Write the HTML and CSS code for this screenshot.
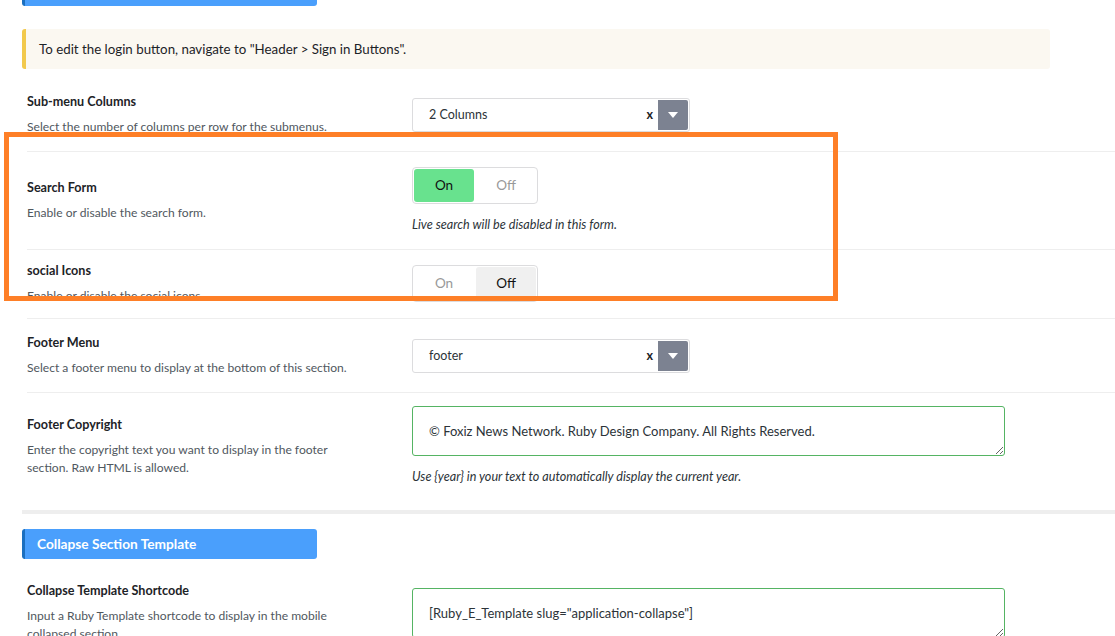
FILE: index.html
```html
<!DOCTYPE html>
<html>
<head>
<meta charset="utf-8">
<link rel="stylesheet" href="styles.css">
</head>
<body>
<div class="page">
  <div class="section-head section-head--top"></div>

  <div class="notice">To edit the login button, navigate to "Header &gt; Sign in Buttons".</div>

  <div class="field">
    <div class="field-label">
      <div class="field-title">Sub-menu Columns</div>
      <div class="field-desc">Select the number of columns per row for the submenus.</div>
    </div>
    <div class="field-control">
      <div class="select">
        <span class="select-value">2 Columns</span>
        <span class="select-clear">x</span>
        <span class="select-arrow"><svg width="10" height="6" viewBox="0 0 10 6"><polygon points="0,0 10,0 5,6" fill="#fff"/></svg></span>
      </div>
    </div>
  </div>

  <div class="field">
    <div class="field-label">
      <div class="field-title">Search Form</div>
      <div class="field-desc">Enable or disable the search form.</div>
    </div>
    <div class="field-control">
      <div class="toggle">
        <span class="toggle-opt toggle-opt--on">On</span>
        <span class="toggle-opt">Off</span>
      </div>
      <div class="field-note">Live search will be disabled in this form.</div>
    </div>
  </div>

  <div class="field field--tight">
    <div class="field-label">
      <div class="field-title">social Icons</div>
      <div class="field-desc">Enable or disable the social icons.</div>
    </div>
    <div class="field-control">
      <div class="toggle">
        <span class="toggle-opt">On</span>
        <span class="toggle-opt toggle-opt--off">Off</span>
      </div>
    </div>
  </div>

  <div class="field">
    <div class="field-label">
      <div class="field-title">Footer Menu</div>
      <div class="field-desc">Select a footer menu to display at the bottom of this section.</div>
    </div>
    <div class="field-control">
      <div class="select">
        <span class="select-value">footer</span>
        <span class="select-clear">x</span>
        <span class="select-arrow"><svg width="10" height="6" viewBox="0 0 10 6"><polygon points="0,0 10,0 5,6" fill="#fff"/></svg></span>
      </div>
    </div>
  </div>

  <div class="field field--last">
    <div class="field-label">
      <div class="field-title">Footer Copyright</div>
      <div class="field-desc">Enter the copyright text you want to display in the footer section. Raw HTML is allowed.</div>
    </div>
    <div class="field-control">
      <textarea class="textarea" readonly>© Foxiz News Network. Ruby Design Company. All Rights Reserved.</textarea>
      <div class="field-note">Use {year} in your text to automatically display the current year.</div>
    </div>
  </div>

  <div class="section-divider"></div>

  <div class="section-head">Collapse Section Template</div>

  <div class="field field--top">
    <div class="field-label">
      <div class="field-title">Collapse Template Shortcode</div>
      <div class="field-desc">Input a Ruby Template shortcode to display in the mobile collapsed section.</div>
    </div>
    <div class="field-control field-control--offset">
      <textarea class="textarea" readonly>[Ruby_E_Template slug="application-collapse"]</textarea>
    </div>
  </div>
</div>

<div class="annotation"></div>
</body>
</html>
```
FILE: styles.css
```css
html, body {
  margin: 0;
  padding: 0;
  background: #fff;
  overflow: hidden;
}
body {
  font-family: "Lato", "Open Sans", sans-serif;
  color: #1d2327;
  width: 1115px;
  height: 636px;
  position: relative;
}
.page {
  padding-left: 22px;
}
.section-head {
  width: 295px;
  height: 30px;
  box-sizing: border-box;
  background: #4a9ffc;
  border-left: 3px solid #1b6fbf;
  border-radius: 3px;
  color: #fff;
  font-weight: 700;
  font-size: 13.7px;
  line-height: 30px;
  padding-left: 12px;
}
.section-head--top {
  margin-top: -24px;
}
.notice {
  margin-top: 23px;
  width: 1028px;
  height: 40px;
  box-sizing: border-box;
  background: #fbf8f1;
  border-left: 4px solid #f2c94c;
  border-radius: 3px;
  padding-left: 13px;
  font-size: 13.3px;
  line-height: 40px;
  color: #1d2327;
}
.field {
  margin-left: 5px;
  display: flex;
  align-items: center;
  padding: 15px 0;
  border-bottom: 1px solid #eeeeee;
}
.notice + .field {
  margin-top: 9px;
}
.field--tight {
  padding: 12px 0 13px;
}
.field--last {
  border-bottom: none;
  padding-top: 13px;
}
.field--top {
  align-items: flex-start;
  padding-top: 23px;
}
.field-label {
  width: 385px;
  box-sizing: border-box;
  padding-right: 45px;
  flex: none;
}
.field-title {
  font-size: 12.6px;
  font-weight: 700;
  line-height: 17px;
  color: #1d2327;
}
.field-desc {
  margin-top: 8px;
  font-size: 12.1px;
  line-height: 18px;
  color: #50575e;
}
.field-control {
  flex: none;
}
.field-control--offset {
  margin-top: 6px;
}
.field-note {
  margin-top: 12px;
  font-size: 12.6px;
  font-style: italic;
  line-height: 18px;
  color: #2c3338;
}
.select {
  width: 278px;
  height: 34px;
  box-sizing: border-box;
  border: 1px solid #dcdcde;
  border-radius: 3px;
  background: #fff;
  display: flex;
  align-items: center;
  padding: 1px 1px 1px 16px;
}
.select-value {
  flex: 1;
  font-size: 12.5px;
  color: #2c3338;
}
.select-clear {
  font-size: 12.5px;
  font-weight: 700;
  color: #1d2327;
  margin-right: 5px;
}
.select-arrow {
  width: 30px;
  height: 30px;
  background: #7c8291;
  border-radius: 0 2px 2px 0;
  display: flex;
  align-items: center;
  justify-content: center;
}
.select-arrow svg {
  display: block;
}
.toggle {
  display: inline-flex;
  gap: 2px;
  padding: 1px;
  border: 1px solid #dcdcde;
  border-radius: 4px;
  background: #fff;
}
.toggle-opt {
  width: 60px;
  height: 33px;
  border-radius: 3px;
  font-size: 13.5px;
  line-height: 33px;
  text-align: center;
  color: #999;
}
.toggle-opt--on {
  background: #68e28e;
  color: #111;
}
.toggle-opt--off {
  background: #f0f0f0;
  color: #111;
}
.textarea {
  display: block;
  width: 593px;
  height: 50px;
  box-sizing: border-box;
  border: 1px solid #55b463;
  border-radius: 3px;
  padding: 15px 16px;
  font-family: "Lato", "Open Sans", sans-serif;
  font-size: 13px;
  line-height: 18px;
  color: #2c3338;
  margin: 0;
  outline: none;
}
.section-divider {
  margin-top: 9px;
  height: 4px;
  background: #eeeeee;
  margin-bottom: 15px;
}
.annotation {
  position: absolute;
  left: 4px;
  top: 132px;
  width: 834px;
  height: 169px;
  box-sizing: border-box;
  border: 5px solid #fe7f27;
  pointer-events: none;
}
```
